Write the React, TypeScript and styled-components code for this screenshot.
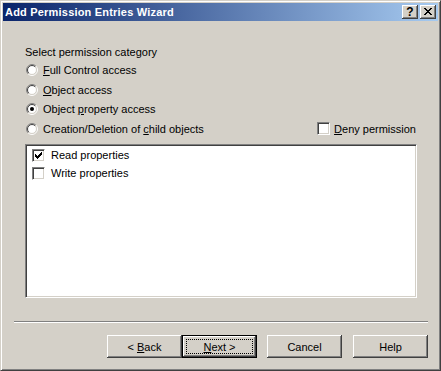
import React from 'react'
import styled, { createGlobalStyle } from 'styled-components'

const GlobalStyle = createGlobalStyle`
  html, body {
    margin: 0;
    padding: 0;
    background: #d4d0c8;
  }
  body {
    font-family: "Liberation Sans", Arial, sans-serif;
    font-size: 11px;
    color: #000;
  }
`

const Window = styled.div`
  width: 441px;
  height: 371px;
  box-sizing: border-box;
  background: #d4d0c8;
  border: 1px solid;
  border-color: #d4d0c8 #404040 #404040 #d4d0c8;
  box-shadow: inset 1px 1px #fff, inset -1px -1px #808080;
  padding: 2px;
  display: flex;
  flex-direction: column;
`

const TitleBar = styled.div`
  height: 18px;
  flex: none;
  display: flex;
  align-items: center;
  padding: 0 2px;
  background: linear-gradient(to right, #0a246a, #a6caf0);
`

const TitleText = styled.div`
  flex: 1;
  color: #fff;
  font-weight: bold;
  font-size: 11px;
  letter-spacing: 0.2px;
  white-space: nowrap;
`

const CaptionButton = styled.div<{ $gap?: number }>`
  width: 16px;
  height: 14px;
  box-sizing: border-box;
  margin-left: ${(p) => p.$gap ?? 0}px;
  background: #d4d0c8;
  box-shadow: inset -1px -1px #404040, inset 1px 1px #fff, inset -2px -2px #808080;
  display: flex;
  align-items: center;
  justify-content: center;
  font-weight: bold;
  font-size: 12px;
  line-height: 14px;
  padding-bottom: 1px;
`

const Body = styled.div`
  flex: 1;
  display: flex;
  flex-direction: column;
  padding: 0 10px 0 11px;
`

const Caption = styled.div`
  margin: 25px 0 0 11px;
  line-height: 13px;
  white-space: nowrap;
`

const RadioGroup = styled.div`
  margin: 1.5px 12px 0 12px;
  display: flex;
  flex-direction: column;
`

const Row = styled.div`
  height: 19.5px;
  display: flex;
  align-items: center;
  justify-content: space-between;
`

const Option = styled.label<{ $gap: number }>`
  display: flex;
  align-items: center;
  gap: ${(p) => p.$gap}px;
  white-space: nowrap;
`

const CheckFrame = styled.span`
  width: 13px;
  height: 13px;
  box-sizing: border-box;
  flex: none;
  background: #fff;
  border: 1px solid;
  border-color: #808080 #fff #fff #808080;
  box-shadow: inset 1px 1px #404040, inset -1px -1px #d4d0c8;
  display: flex;
  align-items: center;
  justify-content: center;
`

const ListBox = styled.div`
  margin: 5.5px 11px 0 11px;
  height: 154px;
  box-sizing: border-box;
  background: #fff;
  border: 1px solid;
  border-color: #808080 #fff #fff #808080;
  box-shadow: inset 1px 1px #404040, inset -1px -1px #d4d0c8;
  padding: 1px 0 0 6px;
  display: flex;
  flex-direction: column;
`

const ListRow = styled.div`
  height: 18px;
  display: flex;
  align-items: center;
  gap: 6px;
  white-space: nowrap;
`

const Separator = styled.div`
  margin-top: 23px;
  height: 0;
  border-top: 1px solid #808080;
  border-bottom: 1px solid #fff;
`

const ButtonRow = styled.div`
  margin-top: 12px;
  display: flex;
  justify-content: flex-end;
`

const Button = styled.div<{ $default?: boolean; $gap?: number }>`
  width: 75px;
  height: 23px;
  box-sizing: border-box;
  margin-left: ${(p) => p.$gap ?? 0}px;
  background: #d4d0c8;
  border: ${(p) => (p.$default ? '1px solid #000' : 'none')};
  box-shadow: inset -1px -1px #404040, inset 1px 1px #fff, inset -2px -2px #808080;
  padding: ${(p) => (p.$default ? 3 : 4)}px;
  display: flex;
`

const ButtonFace = styled.span<{ $focus?: boolean }>`
  flex: 1;
  border: 1px dotted ${(p) => (p.$focus ? '#000' : 'transparent')};
  display: flex;
  align-items: center;
  justify-content: center;
  white-space: pre;
`

function Radio({ checked }: { checked?: boolean }) {
  const arc = (r: number, from: [number, number], to: [number, number]) =>
    `M${from[0]} ${from[1]} A${r} ${r} 0 0 1 ${to[0]} ${to[1]}`
  const pts = (r: number): [[number, number], [number, number]] => {
    const d = r * 0.7071
    return [
      [6 - d, 6 + d],
      [6 + d, 6 - d],
    ]
  }
  const [o1, o2] = pts(5.5)
  const [i1, i2] = pts(4.5)
  return (
    <svg width="12" height="12" viewBox="0 0 12 12">
      <circle cx="6" cy="6" r="4.5" fill="#fff" />
      <path d={arc(5.5, o1, o2)} stroke="#808080" fill="none" />
      <path d={arc(5.5, o2, o1)} stroke="#fff" fill="none" />
      <path d={arc(4.5, i1, i2)} stroke="#404040" fill="none" />
      <path d={arc(4.5, i2, i1)} stroke="#d4d0c8" fill="none" />
      {checked && <circle cx="6" cy="6" r="2" fill="#000" />}
    </svg>
  )
}

function Check({ checked }: { checked?: boolean }) {
  // classic 7x7 tick, each column is 3px tall
  const cols = [2, 3, 4, 3, 2, 1, 0]
  return (
    <CheckFrame>
      {checked && (
        <svg width="7" height="7" viewBox="0 0 7 7" shapeRendering="crispEdges">
          {cols.map((y, x) => (
            <rect key={x} x={x} y={y} width="1" height="3" fill="#000" />
          ))}
        </svg>
      )}
    </CheckFrame>
  )
}

function CloseGlyph() {
  const rows = ['11000011', '01100110', '00111100', '00011000', '00111100', '01100110', '11000011']
  return (
    <svg width="8" height="7" viewBox="0 0 8 7" shapeRendering="crispEdges">
      {rows.flatMap((r, y) =>
        r.split('').map((c, x) => (c === '1' ? <rect key={`${x}-${y}`} x={x} y={y} width="1" height="1" fill="#000" /> : null))
      )}
    </svg>
  )
}

export default function App() {
  return (
    <>
      <GlobalStyle />
      <Window>
        <TitleBar>
          <TitleText>Add Permission Entries Wizard</TitleText>
          <CaptionButton>?</CaptionButton>
          <CaptionButton $gap={2}>
            <CloseGlyph />
          </CaptionButton>
        </TitleBar>
        <Body>
          <Caption>Select permission category</Caption>
          <RadioGroup>
            <Row>
              <Option $gap={5}>
                <Radio />
                <span>
                  <u>F</u>ull Control access
                </span>
              </Option>
            </Row>
            <Row>
              <Option $gap={5}>
                <Radio />
                <span>
                  <u>O</u>bject access
                </span>
              </Option>
            </Row>
            <Row>
              <Option $gap={5}>
                <Radio checked />
                <span>
                  Object <u>p</u>roperty access
                </span>
              </Option>
            </Row>
            <Row>
              <Option $gap={5}>
                <Radio />
                <span>
                  Creation/Deletion of <u>c</u>hild objects
                </span>
              </Option>
              <Option $gap={4}>
                <Check />
                <span>
                  <u>D</u>eny permission
                </span>
              </Option>
            </Row>
          </RadioGroup>
          <ListBox>
            <ListRow>
              <Check checked />
              <span>Read properties</span>
            </ListRow>
            <ListRow>
              <Check />
              <span>Write properties</span>
            </ListRow>
          </ListBox>
          <Separator />
          <ButtonRow>
            <Button>
              <ButtonFace>
                <span>{'< '}</span>
                <u>B</u>
                <span>ack</span>
              </ButtonFace>
            </Button>
            <Button $default>
              <ButtonFace $focus>
                <u>N</u>
                <span>{'ext >'}</span>
              </ButtonFace>
            </Button>
            <Button $gap={10}>
              <ButtonFace>Cancel</ButtonFace>
            </Button>
            <Button $gap={11}>
              <ButtonFace>Help</ButtonFace>
            </Button>
          </ButtonRow>
        </Body>
      </Window>
    </>
  )
}
